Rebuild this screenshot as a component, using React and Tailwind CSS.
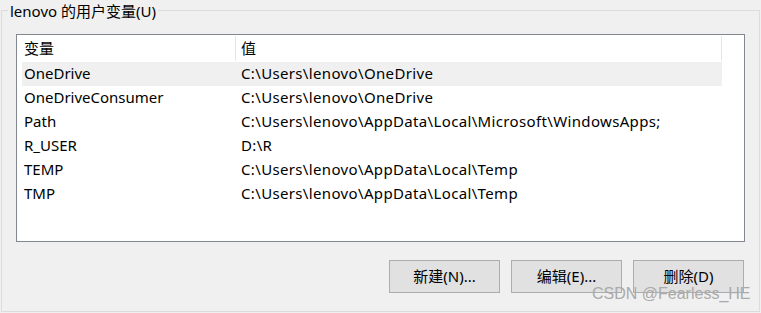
const rows = [
  { name: "OneDrive", value: "C:\\Users\\lenovo\\OneDrive", selected: true },
  { name: "OneDriveConsumer", value: "C:\\Users\\lenovo\\OneDrive" },
  { name: "Path", value: "C:\\Users\\lenovo\\AppData\\Local\\Microsoft\\WindowsApps;" },
  { name: "R_USER", value: "D:\\R" },
  { name: "TEMP", value: "C:\\Users\\lenovo\\AppData\\Local\\Temp" },
  { name: "TMP", value: "C:\\Users\\lenovo\\AppData\\Local\\Temp" },
];

const font = {
  fontFamily: '"Noto Sans", "Noto Sans CJK SC", sans-serif',
};

function Button({ children }) {
  return (
    <button className="w-[111px] h-[33px] bg-[#e1e1e1] border border-[#adadad] text-[15px] text-black">
      {children}
    </button>
  );
}

export default function App() {
  return (
    <div
      className="relative w-[761px] h-[313px] bg-[#f0f0f0] pl-px text-black overflow-hidden"
      style={font}
    >
      <fieldset className="w-[759px] h-[312px] border border-[#dcdcdc] m-0 p-0">
        <legend className="ml-[6px] px-[2px] text-[15px] leading-[20px] pt-[1px]">
          lenovo 的用户变量(U)
        </legend>

        {/* variable list */}
        <div className="ml-[14px] mt-[13px] w-[729px] h-[208px] border border-[#828790] bg-white pl-[5px]">
          <div className="flex w-[700px] h-[27px] items-center text-[15px]">
            <div className="w-[213px] h-full pl-[2px] flex items-center">变量</div>
            <div className="w-px h-[25px] bg-[#e5e5e5]" />
            <div className="flex-1 h-full pl-[5px] flex items-center">值</div>
            <div className="w-px h-[25px] bg-[#e5e5e5]" />
          </div>
          {rows.map((r) => (
            <div
              key={r.name}
              className={`flex w-[700px] h-[24px] items-center pb-[2px] text-[15px] leading-[20px] ${
                r.selected ? "bg-[#f0f0f0]" : ""
              }`}
            >
              <div className="w-[214px] pl-[2px] whitespace-nowrap">{r.name}</div>
              <div className="flex-1 pl-[5px] whitespace-nowrap tracking-[0.35px]">{r.value}</div>
            </div>
          ))}
        </div>

        <div className="flex justify-end gap-[11px] mt-[18px] pr-[15px]">
          <Button>新建(N)...</Button>
          <Button>编辑(E)...</Button>
          <Button>删除(D)</Button>
        </div>
      </fieldset>

      {/* watermark */}
      <div
        className="absolute left-[592px] top-[285px] text-[16px] leading-[18px] text-[#aaaaaa] whitespace-nowrap"
        style={{ fontFamily: '"Liberation Sans", sans-serif' }}
      >
        CSDN @Fearless_HE
      </div>
    </div>
  );
}
